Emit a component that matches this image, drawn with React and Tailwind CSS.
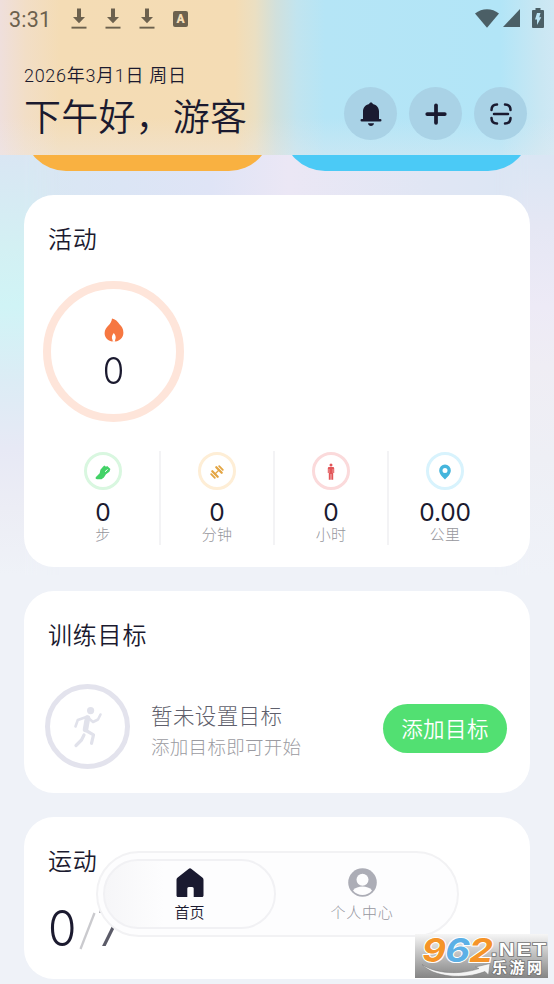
import { LuPlus } from "react-icons/lu";

const cjk = "font-['Noto_Sans_CJK_SC',sans-serif]";

const stats = [
  { value: "0", label: "步", icon: <ShoeIcon />, ring: "border-[#d9f7e0]" },
  { value: "0", label: "分钟", icon: <DumbbellIcon />, ring: "border-[#feeed6]" },
  { value: "0", label: "小时", icon: <PersonIcon />, ring: "border-[#fbdadb]" },
  { value: "0.00", label: "公里", icon: <PinIcon />, ring: "border-[#d8f3fd]" },
];

function DownloadIcon() {
  return (
    <svg width="16" height="21" viewBox="0 0 16 21" fill="#6c614e">
      <path d="M6 0.500h4v8.500h4L8 15.200 2 9h4z" />
      <path d="M0.500 18.700h15v1.900h-15z" />
    </svg>
  );
}

function ShoeIcon() {
  return (
    <svg className="mt-[3px]" width="16" height="15" viewBox="0 0 16 15" fill="#43d267">
      <path d="M9.300.6 11 1.700l1.200-.6 3.200 3-1 2.600-3.400 2.600-2.100 3.300-2.400 1.700H2.200C.6 14.300.1 13 1 12l3.700-3.700.7-3.600L8 1.700z" />
      <path d="M10.300 6.500l2-1.800" stroke="#fff" strokeWidth="1" strokeLinecap="round" />
    </svg>
  );
}

function DumbbellIcon() {
  return (
    <svg className="mt-[2px]" width="14" height="14" viewBox="0 0 14 14" stroke="#e3a543" strokeLinecap="round" fill="none">
      <path d="M5 9 9 5" strokeWidth="1.300" />
      <path d="M2.300 6.300l5.400 5.400M6.300 2.300l5.400 5.400" strokeWidth="2.300" />
      <path d="M1.200 9.200l3.600 3.600M9.200 1.200l3.600 3.600" strokeWidth="1.800" />
    </svg>
  );
}

function PersonIcon() {
  return (
    <svg className="mt-[2px]" width="8" height="18" viewBox="0 0 8 18" fill="#e25558">
      <circle cx="4" cy="1.900" r="1.500" />
      <path d="M2 4h4c.8 0 1.200.7 1.200 1.500V10H6.200v6.800H4.300V11h-.6v5.800H1.800V10H.8V5.500C.8 4.700 1.200 4 2 4z" />
      <path d="M2 6v4M6 6v4" stroke="#fff" strokeWidth="0.400" />
    </svg>
  );
}

function PinIcon() {
  return (
    <svg className="mt-[2px]" width="12" height="16" viewBox="0 0 12 16" fill="#45b5dc">
      <path fillRule="evenodd" d="M6 .6a5.800 5.800 0 0 1 5.800 5.900c0 3.500-3.300 6.600-5.800 9-2.500-2.400-5.800-5.500-5.800-9A5.800 5.800 0 0 1 6 .6zm0 3.300a2.500 2.500 0 1 0 0 5 2.500 2.500 0 0 0 0-5z" />
    </svg>
  );
}

function FlameIcon() {
  return (
    <svg width="20" height="24" viewBox="0 0 20 24">
      <path d="M8 .5c3 .6 6 3 7.700 6 2 1.500 3.700 4.500 3.700 8.200 0 5-4 8.800-9.400 8.800S.6 20 .6 15.200c0-3.500 2-5.600 3.800-7.600C6.500 5.300 7.700 3.300 8 .5z" fill="#f67741" />
      <path d="M9.800 15c1.300 1.600 1.900 3 1.900 4.500 0 1.200-.4 2-.7 2.700l.3 1.500H8.500l.2-1.500c-.4-.7-.8-1.500-.8-2.700 0-1.500.7-2.900 1.900-4.500z" fill="#fff" />
    </svg>
  );
}

function RunnerIcon() {
  return (
    <svg width="30" height="42" viewBox="0 0 30 42" fill="none" stroke="#e1e2eb" strokeLinecap="round" strokeLinejoin="round">
      <circle cx="17.600" cy="4.600" r="3.600" fill="#e1e2eb" stroke="none" />
      <path d="M2.500 20.500l2.300-6.500L14 10.800l6 5.200 5-2.500 2.500-5" strokeWidth="2.600" />
      <path d="M14.500 12l-2 11.500" strokeWidth="5.500" />
      <path d="M13 24.500l7.500 4.300-2 8.500" strokeWidth="3.200" />
      <path d="M11 29l-2.500 5-5.500 5.500" strokeWidth="3.200" />
    </svg>
  );
}

function StatusBar() {
  return (
    <div className="flex h-[36px] items-center justify-between pl-[9px] pr-[10px]">
      <div className="flex items-center pt-[1px]">
        <span className="w-[62px] pt-[2px] font-['Roboto',sans-serif] text-[21.500px] leading-none tracking-[0.2px] text-[#6c614e]">3:31</span>
        <div className="flex gap-[18px]">
          <DownloadIcon />
          <DownloadIcon />
          <DownloadIcon />
        </div>
        <span className="ml-[18px] flex h-[16px] w-[15px] items-center justify-center rounded-[2px] bg-[#6c614e] font-['Roboto',sans-serif] text-[12px] font-black leading-none text-[#f5dcb4]">A</span>
      </div>
      <div className="flex items-center">
        <svg width="24" height="19" viewBox="0 0 24 19" fill="#4b5f66">
          <path d="M0 4.500C7-1.200 17-1.200 24 4.500L12 18.700z" />
        </svg>
        <svg className="ml-[4px]" width="17" height="18" viewBox="0 0 17 18" fill="#4b5f66">
          <path d="M17 0v18H0z" />
        </svg>
        <svg className="ml-[12px]" width="12" height="20" viewBox="0 0 12 20" fill="#4b5f66">
          <path d="M3.500 0h5v2H11a1 1 0 0 1 1 1v16a1 1 0 0 1-1 1H1a1 1 0 0 1-1-1V3a1 1 0 0 1 1-1h2.500z" />
          <path d="M5 5h3.500L7.300 9.200h2L5 17v-5.500H3z" fill="#b9e4f4" />
        </svg>
      </div>
    </div>
  );
}

function RoundButton({ children }) {
  return (
    <button className="flex size-[53px] items-center justify-center rounded-full bg-[#a9d2e6]">
      {children}
    </button>
  );
}

function Header() {
  return (
    <header className="relative h-[155px] overflow-hidden bg-[linear-gradient(90deg,#efdfdc_0px,#f2dec6_26px,#f4dcb5_60px,#f4dcb4_235px,#ebdfc2_255px,#d1e0dc_276px,#c1e4ef_297px,#b5e5f6_325px,#b2e5f7_500px,#c9e7f3_540px,#cfe8f4_554px)]">
      <div className="absolute inset-x-0 bottom-0 h-[38px] bg-[linear-gradient(180deg,#ecebf000,#ecebf055)]" />
      <div className="relative">
        <StatusBar />
        <div className="flex justify-between pl-[24px] pr-[27px]">
          <div className="pt-[29px] text-[#1b1a2f]">
            <p className="font-['Roboto','Noto_Sans_CJK_SC',sans-serif] text-[18px] font-[350] leading-[22px] tracking-[0.700px]">2026年3月1日 周日</p>
            <h1 className="mt-[1px] whitespace-nowrap font-['Noto_Sans_CJK_SC',sans-serif] text-[37px] font-[350] leading-[54px] tracking-[0.200px]">下午好，游客</h1>
          </div>
          <div className="flex gap-[12px] pt-[51px]">
            <RoundButton>
              <svg width="22" height="26" viewBox="0 0 22 26" fill="#1a1a30">
                <path d="M11 1.500c1 0 1.600.6 1.800 1.400 4 .9 6.200 3.700 6.200 7.600v7.500h1.200a1.200 1.200 0 0 1 0 2.600H1.800a1.200 1.200 0 0 1 0-2.600H3v-7.500c0-3.900 2.200-6.700 6.200-7.600.2-.8.800-1.400 1.800-1.400zM8 22.300h6c-.3 1.700-1.400 2.700-3 2.700s-2.700-1-3-2.700z" />
              </svg>
            </RoundButton>
            <RoundButton>
              <LuPlus size={30} strokeWidth={3} color="#1a1a30" />
            </RoundButton>
            <RoundButton>
              <svg width="22" height="22" viewBox="0 0 22 22" fill="none" stroke="#1a1a30" strokeWidth="2.500" strokeLinecap="round">
                <path d="M1.500 7c0-3.500 2-5.500 5.500-5.500M15 1.500c3.500 0 5.500 2 5.500 5.500M20.500 15c0 3.500-2 5.500-5.500 5.500M7 20.500c-3.500 0-5.500-2-5.500-5.500M4 11h14" />
              </svg>
            </RoundButton>
          </div>
        </div>
      </div>
    </header>
  );
}

function Card({ title, className, children }) {
  return (
    <section className={`rounded-[30px] bg-white px-[24px] ${className}`}>
      <h2 className={`${cjk} pt-[25px] text-[24px] font-[350] leading-[36px] tracking-[0.8px] text-[#1b1a2f]`}>{title}</h2>
      {children}
    </section>
  );
}

function ActivityCard() {
  return (
    <Card title="活动" className="h-[372px]">
      <div className="-ml-[5px] mt-[25px] flex size-[141px] flex-col items-center rounded-full border-[8px] border-[#fee5da] pt-[29px]">
        <FlameIcon />
        <span className="mt-[8px] scale-x-[.94] font-['Inter',sans-serif] text-[37px] font-light leading-[41px] text-[#1b1a2f]">0</span>
      </div>
      <div className="-ml-px mt-[29px] grid w-[456px] grid-cols-4">
        {stats.map((stat, i) => (
          <div key={stat.label} className={`flex h-[94px] flex-col items-center border-r-2 ${i < 3 ? "border-[#f3f3f5]" : "border-transparent"}`}>
            <span className={`mt-px flex size-[38px] items-center justify-center rounded-full border-[3px] ${stat.ring}`}>{stat.icon}</span>
            <span className="mt-[8px] font-['Inter',sans-serif] text-[24.500px] leading-[28px] tracking-[-0.200px] text-[#1b1a2f]">{stat.value}</span>
            <span className={`${cjk} text-[15px] font-light leading-[15px] tracking-[0.3px] text-[#96969c]`}>{stat.label}</span>
          </div>
        ))}
      </div>
    </Card>
  );
}

function GoalCard() {
  return (
    <Card title="训练目标" className="h-[202px]">
      <div className="-ml-[3px] -mr-px mt-[32px] flex items-center">
        <span className="flex size-[85px] shrink-0 items-center justify-center rounded-full border-[5px] border-[#e3e3ed]">
          <RunnerIcon />
        </span>
        <div className={`${cjk} ml-[21px] flex-1 whitespace-nowrap pt-[5px]`}>
          <p className="text-[21.500px] font-light leading-[32px] tracking-[0.4px] text-[#5f5f6c]">暂未设置目标</p>
          <p className="mt-px text-[18.500px] font-light leading-[28px] tracking-[0.3px] text-[#9b9ba1]">添加目标即可开始</p>
        </div>
        <button className={`${cjk} mt-[3px] h-[49px] w-[124px] rounded-full bg-[#52e072] text-[21.500px] font-[350] tracking-[0.4px] text-white`}>添加目标</button>
      </div>
    </Card>
  );
}

function SportCard() {
  return (
    <Card title="运动" className="h-[162px]">
      <div className="mt-[20px] flex items-center font-['Inter',sans-serif] leading-[62px]">
        <span className="w-[31px] origin-left scale-x-[.94] text-[49px] font-light text-[#1b1a2f]">0</span>
        <svg className="mt-[3px]" width="17" height="38" viewBox="0 0 17 38">
          <path d="M15.500 1 1.500 37" stroke="#cacace" strokeWidth="2.300" />
        </svg>
        <span className="ml-px text-[49px] font-light text-[#5b5b68]">7</span>
      </div>
    </Card>
  );
}

function TabBar() {
  return (
    <nav className={`${cjk} absolute left-[96px] top-[851px] flex h-[86px] w-[363px] items-center rounded-full border-2 border-[#f2f2f4] bg-[#fdfdfe] px-[5px] text-[15px] leading-[22px]`}>
      <div className="flex h-[70px] w-[173px] flex-col items-center rounded-full border-2 border-[#f1f1f4] bg-[linear-gradient(90deg,#f6f6f8,#fdfdfe_35%)] pt-[7px] text-[#1b1a2f]">
        <svg width="28" height="30" viewBox="0 0 28 30" fill="#1a1a30">
          <path d="M12.500.9a2.300 2.300 0 0 1 3 0L26.300 9.500c.8.700 1.200 1.400 1.200 2.500v15.500c0 .9-.6 1.500-1.500 1.500h-8.300v-8.500a1.500 1.500 0 0 0-1.500-1.500h-3.400a1.500 1.500 0 0 0-1.500 1.500V29H2c-.9 0-1.500-.6-1.500-1.500V12c0-1.100.4-1.800 1.200-2.500z" />
        </svg>
        <span className="mt-[3px] font-[350]">首页</span>
      </div>
      <div className="flex h-[70px] w-[172px] flex-col items-center pt-[9px] font-light text-[#96969e]">
        <svg width="29" height="29" viewBox="0 0 29 29">
          <circle cx="14.500" cy="14.500" r="14.300" fill="#acadb6" />
          <circle cx="14.500" cy="11.700" r="6" fill="#fdfdfe" />
          <path d="M5 22.500c2-3 6-4 9.500-4s7.500 1 9.500 4c-2.300 2.900-5.700 4.500-9.500 4.500S7.300 25.400 5 22.500z" fill="#fdfdfe" />
        </svg>
        <span className="mt-[4px] tracking-[0.7px]">个人中心</span>
      </div>
    </nav>
  );
}

function Watermark() {
  return (
    <div className="absolute left-[415px] top-[934px] h-[44px] w-[133px] bg-[linear-gradient(180deg,#f6f6f6,#c2c2c2_45%,#858585)]">
      <svg className="overflow-visible" width="133" height="44" viewBox="0 0 133 44">
        <path d="M7 30.500C21 40 45 41 64 34.500l-3.500-1.500L75 29.500 73.500 41l-3.500-3.500C49 46 18 43 7 30.500z" fill="#f4f4f4" stroke="#777" strokeWidth="0.500" />
        <g fontFamily="'Inter', sans-serif" fontWeight="700" fontStyle="italic" fontSize="33" stroke="#fff" strokeWidth="2" paintOrder="stroke">
          <text x="7" y="27.500" textLength="24" lengthAdjust="spacingAndGlyphs" fill="#f59428">9</text>
          <text x="30" y="27.500" textLength="25" lengthAdjust="spacingAndGlyphs" fill="#5cb0e6">6</text>
          <text x="54" y="27.500" textLength="24" lengthAdjust="spacingAndGlyphs" fill="#f59428">2</text>
        </g>
        <g fill="#fff" stroke="#747474" strokeWidth="1.600" paintOrder="stroke">
          <text x="76" y="22" fontFamily="'Liberation Sans', sans-serif" fontWeight="700" fontSize="18.500" letterSpacing="1.500" textLength="57" lengthAdjust="spacingAndGlyphs">.NET</text>
          <text x="77" y="39" fontFamily="'Noto Sans CJK SC', sans-serif" fontWeight="700" fontSize="15" textLength="50">乐游网</text>
        </g>
      </svg>
    </div>
  );
}

export default function App() {
  return (
    <div className="relative h-[984px] w-[554px] overflow-hidden bg-[#eff2f8]">
      {/* soft pastel glow behind the cards */}
      <div className="absolute inset-x-0 top-[155px] h-[80px] bg-[linear-gradient(90deg,#d8e8f2,#dbe5f5_22%,#dfe4f6_38%,#ebe7f5_52%,#e0e6f4_78%,#dae6f4)]" />
      <div className="absolute left-0 top-[155px] h-[420px] w-[60px] bg-[linear-gradient(180deg,#d9e6f3,#d3f0f3_22%,#d0f4f6_36%,#dcecf5_54%,#e7e9f5_70%,#ecedf5_84%,#eff2f8)] [mask-image:linear-gradient(90deg,#000_40%,transparent)]" />
      <div className="absolute right-0 top-[155px] h-[420px] w-[60px] bg-[linear-gradient(180deg,#dae6f4,#e5e7f4_17%,#edeaf6_36%,#efedf4_50%,#eeeff5_72%,#eff2f8)] [mask-image:linear-gradient(270deg,#000_40%,transparent)]" />
      <div className="relative">
        <Header />
        <div className="flex h-[16px] items-end justify-between overflow-hidden px-[24px]">
          <div className="h-[90px] w-[247px] shrink-0 rounded-[42px] bg-[#f9b141]" />
          <div className="h-[90px] w-[247px] shrink-0 rounded-[42px] bg-[#4bcaf6]" />
        </div>
        <main className="flex flex-col gap-[24px] px-[24px] pt-[24px]">
          <ActivityCard />
          <GoalCard />
          <SportCard />
        </main>
      </div>
      <TabBar />
      <Watermark />
    </div>
  );
}
